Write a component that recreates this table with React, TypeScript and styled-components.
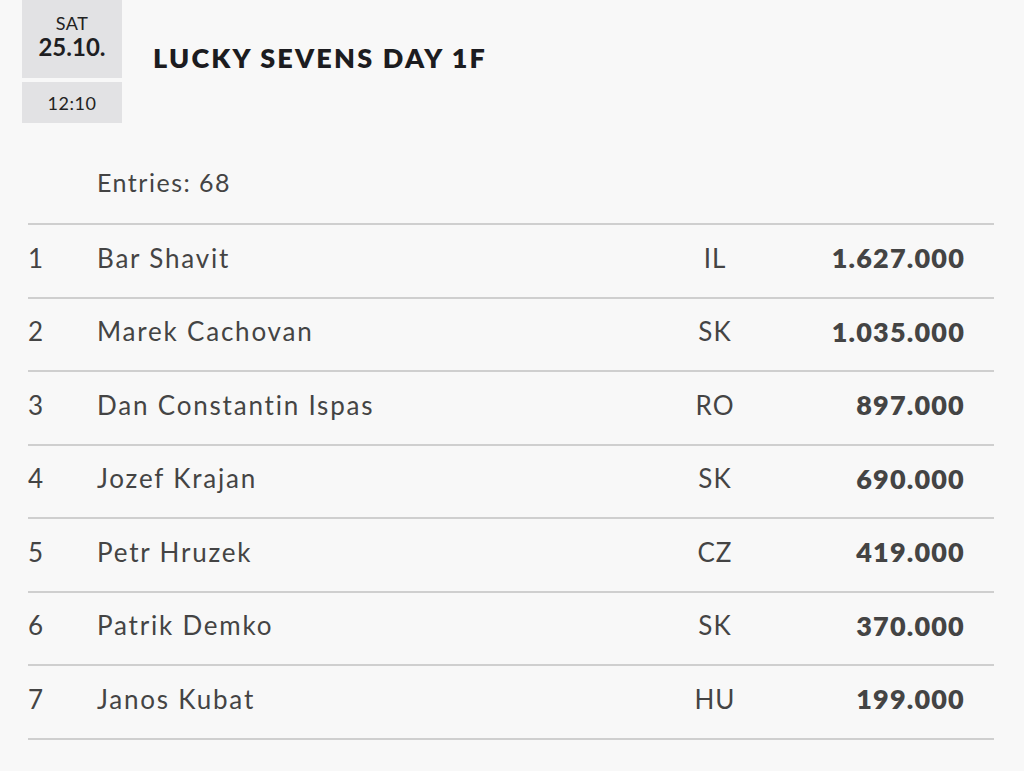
import React from "react";
import styled, { createGlobalStyle } from "styled-components";

const GlobalStyle = createGlobalStyle`
  html, body {
    margin: 0;
    padding: 0;
    background: #f8f8f8;
    font-family: Lato, "Open Sans", sans-serif;
    color: #444;
  }
`;

const Page = styled.div`
  width: 1024px;
  min-height: 771px;
  background: #f8f8f8;
`;

const Header = styled.header`
  display: flex;
  align-items: flex-start;
  padding-left: 22px;
`;

const DateBlock = styled.div`
  width: 100px;
  display: flex;
  flex-direction: column;
  gap: 4px;
`;

const DayBox = styled.div`
  height: 78px;
  background: #e2e2e4;
  display: flex;
  flex-direction: column;
  align-items: center;
  justify-content: center;
  gap: 3px;
  color: #222;
  padding-bottom: 6px;
  box-sizing: border-box;
`;

const Weekday = styled.span`
  font-size: 18px;
  line-height: 18px;
  letter-spacing: 0.5px;
`;

const DateNum = styled.span`
  font-size: 24px;
  font-weight: 700;
  line-height: 24px;
  color: #1e1e22;
`;

const TimeBox = styled.div`
  height: 41px;
  background: #e2e2e4;
  display: flex;
  align-items: center;
  justify-content: center;
  font-size: 18px;
  letter-spacing: 0.5px;
  color: #222;
`;

const Title = styled.h1`
  margin: 42px 0 0 31px;
  font-size: 27px;
  font-weight: 800;
  letter-spacing: 2.2px;
  color: #1c1c20;
  line-height: 32px;
`;

const Board = styled.section`
  padding: 44px 30px 0 28px;
`;

const Entries = styled.div`
  padding-left: 69px;
  font-size: 25px;
  line-height: 30px;
  letter-spacing: 1.5px;
  color: #444;
  margin-bottom: 26px;
`;

const Table = styled.div`
  border-top: 2px solid #cfcfcf;
`;

const Row = styled.div`
  display: grid;
  grid-template-columns: 69px 1fr 90px 234px;
  align-items: center;
  box-sizing: border-box;
  height: 73.5px;
  padding-bottom: 6px;
  border-bottom: 2px solid #cfcfcf;
  font-size: 26px;
  letter-spacing: 1.8px;
  color: #444;
`;

const Rank = styled.span``;

const Name = styled.span``;

const Country = styled.span`
  text-align: center;
  letter-spacing: 1px;
`;

const Amount = styled.span`
  text-align: right;
  padding-right: 30px;
  font-weight: 800;
  font-size: 27px;
  letter-spacing: 1.2px;
  margin-right: -1px;
  color: #444;
`;

const results = [
  { name: "Bar Shavit", country: "IL", amount: "1.627.000" },
  { name: "Marek Cachovan", country: "SK", amount: "1.035.000" },
  { name: "Dan Constantin Ispas", country: "RO", amount: "897.000" },
  { name: "Jozef Krajan", country: "SK", amount: "690.000" },
  { name: "Petr Hruzek", country: "CZ", amount: "419.000" },
  { name: "Patrik Demko", country: "SK", amount: "370.000" },
  { name: "Janos Kubat", country: "HU", amount: "199.000" },
];

const App: React.FC = () => {
  return (
    <Page>
      <GlobalStyle />
      <Header>
        <DateBlock>
          <DayBox>
            <Weekday>SAT</Weekday>
            <DateNum>25.10.</DateNum>
          </DayBox>
          <TimeBox>12:10</TimeBox>
        </DateBlock>
        <Title>LUCKY SEVENS DAY 1F</Title>
      </Header>

      <Board>
        <Entries>Entries: 68</Entries>
        <Table>
          {results.map((r, i) => (
            <Row key={r.name}>
              <Rank>{i + 1}</Rank>
              <Name>{r.name}</Name>
              <Country>{r.country}</Country>
              <Amount>{r.amount}</Amount>
            </Row>
          ))}
        </Table>
      </Board>
    </Page>
  );
};

export default App;
